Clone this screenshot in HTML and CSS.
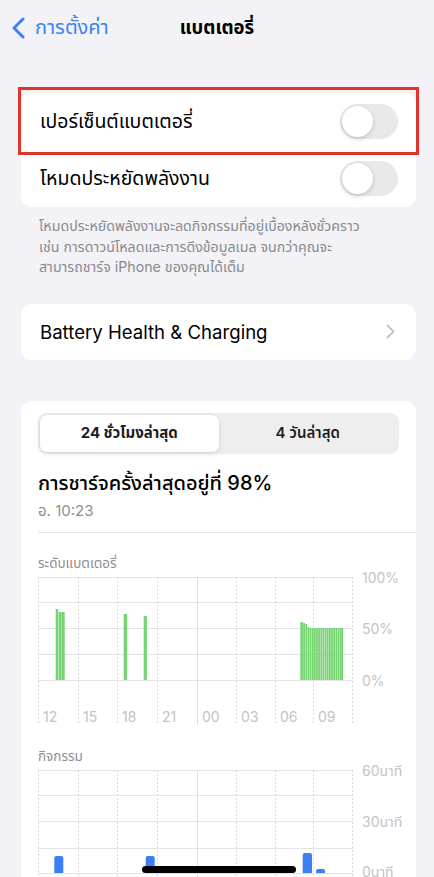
FILE: index.html
```html
<!DOCTYPE html>
<html lang="th">
<head>
<meta charset="utf-8">
<title>แบตเตอรี่</title>
<link rel="stylesheet" href="styles.css">
</head>
<body>
<div class="screen">
  <header class="nav">
    <a class="back">
      <svg class="back-chev" width="14" height="22" viewBox="0 0 14 22"><path d="M11 2 L2 11 L11 20" fill="none" stroke="currentColor" stroke-width="3" stroke-linecap="round" stroke-linejoin="round"/></svg>
      <span>การตั้งค่า</span>
    </a>
    <h1 class="title">แบตเตอรี่</h1>
    <span class="nav-spacer"></span>
  </header>

  <section class="group">
    <div class="row row-marked">
      <span class="label">เปอร์เซ็นต์แบตเตอรี่</span>
      <span class="switch"><span class="knob"></span></span>
      <span class="highlight"></span>
    </div>
    <div class="row">
      <span class="label">โหมดประหยัดพลังงาน</span>
      <span class="switch"><span class="knob"></span></span>
    </div>
  </section>
  <p class="footnote">โหมดประหยัดพลังงานจะลดกิจกรรมที่อยู่เบื้องหลังชั่วคราว<br>เช่น การดาวน์โหลดและการดึงข้อมูลเมล จนกว่าคุณจะ<br>สามารถชาร์จ iPhone ของคุณได้เต็ม</p>

  <section class="group group-link">
    <div class="row">
      <span class="label label-link">Battery Health &amp; Charging</span>
      <svg class="chev" width="9" height="15" viewBox="0 0 9 15"><path d="M1.5 1.5 L7.5 7.5 L1.5 13.5" fill="none" stroke="currentColor" stroke-width="1.8" stroke-linecap="round" stroke-linejoin="round"/></svg>
    </div>
  </section>

  <section class="group chart-card">
    <div class="segmented">
      <span class="seg seg-active">24 ชั่วโมงล่าสุด</span>
      <span class="seg">4 วันล่าสุด</span>
    </div>
    <div class="charge-title">การชาร์จครั้งล่าสุดอยู่ที่ 98%</div>
    <div class="charge-time">อ. 10:23</div>
    <div class="divider"></div>

    <div class="chart-label">ระดับแบตเตอรี่</div>
    <svg class="chart chart-battery" width="378" height="153" viewBox="0 0 378 153">
      <g class="hgrid">
        <line x1="0" y1="5.5" x2="315" y2="5.5"/>
        <line x1="0" y1="30.5" x2="315" y2="30.5"/>
        <line x1="0" y1="56.5" x2="315" y2="56.5"/>
        <line x1="0" y1="82.5" x2="315" y2="82.5"/>
        <line x1="0" y1="108.5" x2="315" y2="108.5"/>
      </g>
      <g class="vgrid">
        <line x1="0.5" y1="5" x2="0.5" y2="153"/>
        <line x1="40.5" y1="5" x2="40.5" y2="153"/>
        <line x1="79.5" y1="5" x2="79.5" y2="153"/>
        <line x1="119.5" y1="5" x2="119.5" y2="153"/>
        <line x1="198.5" y1="5" x2="198.5" y2="153"/>
        <line x1="237.5" y1="5" x2="237.5" y2="153"/>
        <line x1="275.5" y1="5" x2="275.5" y2="153"/>
        <line x1="314.5" y1="5" x2="314.5" y2="153"/>
      </g>
      <line class="vsolid" x1="159.5" y1="5" x2="159.5" y2="153"/>
      <g class="green">
        <rect x="17.7" y="37" width="2.6" height="71"/>
        <rect x="20.7" y="40" width="3" height="68"/>
        <rect x="24" y="40" width="2.7" height="68"/>
        <rect x="85.7" y="42" width="3.4" height="66"/>
        <rect x="105.7" y="44" width="3.2" height="64"/>
        <rect x="262.3" y="50" width="2.6" height="58"/>
        <rect x="265.2" y="51" width="1.8" height="57"/>
        <rect x="267.35" y="52" width="1.8" height="56"/>
        <rect x="269.5" y="55" width="1.8" height="53"/>
        <rect x="271.65" y="56" width="1.8" height="52"/>
        <rect x="273.8" y="56" width="1.8" height="52"/>
        <rect x="275.95" y="56" width="1.8" height="52"/>
        <rect x="278.1" y="56" width="1.8" height="52"/>
        <rect x="280.25" y="56" width="1.8" height="52"/>
        <rect x="282.4" y="56" width="1.8" height="52"/>
        <rect x="284.55" y="56" width="1.8" height="52"/>
        <rect x="286.7" y="56" width="1.8" height="52"/>
        <rect x="288.85" y="56" width="1.8" height="52"/>
        <rect x="291" y="56" width="1.8" height="52"/>
        <rect x="293.15" y="56" width="1.8" height="52"/>
        <rect x="295.3" y="56" width="1.8" height="52"/>
        <rect x="297.45" y="56" width="1.8" height="52"/>
        <rect x="299.6" y="56" width="1.8" height="52"/>
        <rect x="301.75" y="56" width="1.8" height="52"/>
        <rect x="303.3" y="56" width="1.8" height="52"/>
      </g>
      <g class="axis">
        <text x="5" y="150">12</text>
        <text x="45" y="150">15</text>
        <text x="84" y="150">18</text>
        <text x="124" y="150">21</text>
        <text x="164" y="150">00</text>
        <text x="203" y="150">03</text>
        <text x="242" y="150">06</text>
        <text x="280" y="150">09</text>
        <text x="324" y="10.5">100%</text>
        <text x="324" y="61.5">50%</text>
        <text x="324" y="113.5">0%</text>
      </g>
    </svg>

    <div class="chart-label chart-label-activity">กิจกรรม</div>
    <svg class="chart chart-activity" width="378" height="130" viewBox="0 0 378 130">
      <g class="hgrid">
        <line x1="0" y1="5.5" x2="315" y2="5.5"/>
        <line x1="0" y1="30.5" x2="315" y2="30.5"/>
        <line x1="0" y1="56.5" x2="315" y2="56.5"/>
        <line x1="0" y1="83.5" x2="315" y2="83.5"/>
        <line x1="0" y1="108.5" x2="315" y2="108.5"/>
      </g>
      <g class="vgrid">
        <line x1="0.5" y1="5" x2="0.5" y2="130"/>
        <line x1="40.5" y1="5" x2="40.5" y2="130"/>
        <line x1="79.5" y1="5" x2="79.5" y2="130"/>
        <line x1="119.5" y1="5" x2="119.5" y2="130"/>
        <line x1="198.5" y1="5" x2="198.5" y2="130"/>
        <line x1="237.5" y1="5" x2="237.5" y2="130"/>
        <line x1="275.5" y1="5" x2="275.5" y2="130"/>
        <line x1="314.5" y1="5" x2="314.5" y2="130"/>
      </g>
      <line class="vsolid" x1="159.5" y1="5" x2="159.5" y2="130"/>
      <g class="blue">
        <path d="M16.3 108V93Q16.3 91 18.3 91H23.3Q25.3 91 25.3 93V108Z"/>
        <path d="M107.7 108V93Q107.7 91 109.7 91H114.7Q116.7 91 116.7 93V108Z"/>
        <path d="M264.7 108V90Q264.7 88 266.7 88H272Q274 88 274 90V108Z"/>
        <path d="M278 108V106Q278 104 280 104H285Q287 104 287 106V108Z"/>
      </g>
      <g class="axis">
        <text x="324" y="10.5">60นาที</text>
        <text x="324" y="61.5">30นาที</text>
        <text x="324" y="112">0นาที</text>
      </g>
    </svg>
  </section>

  <div class="home-indicator"></div>
</div>
</body>
</html>
```

FILE: styles.css
```css
* { box-sizing: border-box; }
html, body { margin: 0; padding: 0; }
body {
  background: #f2f2f7;
  font-family: "Inter", "Noto Sans Thai", "Noto Sans", "Liberation Sans", sans-serif;
  color: #000;
  overflow: hidden;
}
.screen {
  position: relative;
  width: 434px;
  min-height: 877px;
  padding-bottom: 40px;
}

/* nav */
.nav {
  height: 56px;
  display: grid;
  grid-template-columns: 1fr auto 1fr;
  align-items: center;
}
.back {
  display: flex;
  align-items: center;
  gap: 9px;
  padding-left: 12px;
  color: #3b82f6;
  font-size: 20px;
}
.back-chev { display: block; }
.title {
  margin: 0;
  font-size: 18.5px;
  font-weight: 700;
}

/* groups */
.group {
  margin: 0 18px 0 21px;
  background: #fff;
  border-radius: 11px;
}
.group:first-of-type { margin-top: 37px; }
.row {
  position: relative;
  height: 57px;
  display: flex;
  align-items: center;
  justify-content: space-between;
  padding: 0 18px 0 19px;
}
.label { font-size: 19.5px; }
.label-link { font-size: 18.6px; }
.switch {
  position: relative;
  width: 58px;
  height: 35px;
  border-radius: 18px;
  background: #e9e9eb;
}
.knob {
  position: absolute;
  left: 2px;
  top: 2px;
  width: 31px;
  height: 31px;
  border-radius: 50%;
  background: #fff;
  box-shadow: 0 2px 5px rgba(0,0,0,0.16), 0 0 0 0.5px rgba(0,0,0,0.05);
}
.highlight {
  position: absolute;
  left: -3px;
  right: -3px;
  top: -6px;
  bottom: -5px;
  border: 3px solid #e2332a;
  pointer-events: none;
}

.footnote {
  margin: 9px 0 0;
  padding: 0 18px 0 39px;
  font-size: 14.2px;
  line-height: 20.5px;
  color: #8a8a8e;
  white-space: nowrap;
}

.group-link { margin-top: 26px; }
.group-link .row { height: 56px; padding-right: 21px; }
.chev { color: #c4c4c7; display: block; }

/* chart card */
.chart-card {
  margin-top: 41px;
  padding: 12px 0 0 17px;
  border-radius: 11px 11px 0 0;
}
.segmented {
  margin-right: 17px;
  height: 41px;
  padding: 2px;
  display: flex;
  background: #eeeeef;
  border-radius: 9px;
}
.seg {
  flex: 1;
  display: flex;
  align-items: center;
  justify-content: center;
  font-size: 15px;
  font-weight: 600;
  color: #1c1c1e;
}
.seg-active {
  background: #fff;
  border-radius: 7px;
  box-shadow: 0 2px 6px rgba(0,0,0,0.10), 0 0 0 0.5px rgba(0,0,0,0.04);
  font-weight: 700;
}
.charge-title {
  margin-top: 16px;
  font-size: 20px;
  line-height: 26px;
  font-weight: 500;
}
.charge-time {
  margin-top: 5px;
  font-size: 15px;
  line-height: 20px;
  color: #8e8e93;
}
.divider {
  margin-top: 11px;
  height: 1px;
  background: #e5e5ea;
}
.chart-label {
  margin-top: 21px;
  font-size: 13.5px;
  line-height: 18px;
  color: #8e8e93;
}
.chart-label-activity { margin-top: 22px; }
.chart { display: block; overflow: visible; }
.hgrid line { stroke: #e4e4e8; stroke-width: 1; }
.vgrid line { stroke: #dadade; stroke-width: 1; stroke-dasharray: 2 2; }
.vsolid { stroke: #e0e0e4; stroke-width: 1; }
.green rect { fill: #76d472; }
.blue path { fill: #3a7ff6; }
.axis text {
  font-family: "Inter", "Noto Sans Thai", "Liberation Sans", sans-serif;
  font-size: 14px;
  fill: #c3c3c8;
}

.home-indicator {
  position: absolute;
  left: 142px;
  top: 866px;
  width: 154px;
  height: 7px;
  border-radius: 4px;
  background: #000;
}
```
